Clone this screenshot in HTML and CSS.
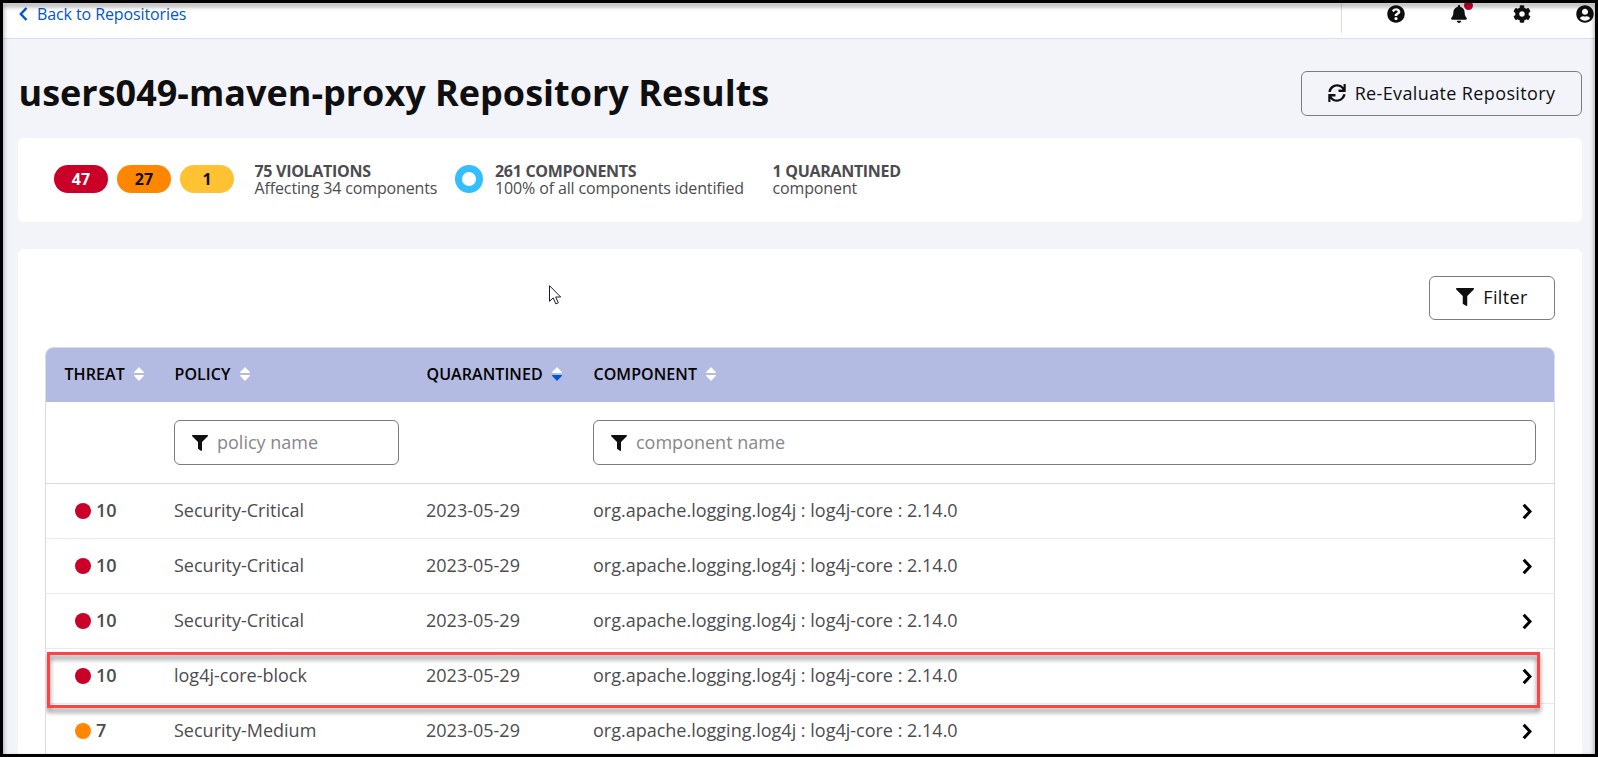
FILE: index.html
```html
<!DOCTYPE html>
<html lang="en">
<head>
<meta charset="utf-8">
<title>Repository Results</title>
<link rel="stylesheet" href="styles.css">
</head>
<body>
<svg class="defs" width="0" height="0">
  <symbol id="funnel" viewBox="0 0 512 512"><path d="M488 0H24C2.7 0-8 25.900 7 41L192 225.900V432c0 7.800 3.800 15.200 10.200 19.700l80 56C298 518.700 320 507.500 320 488V225.900L505 41C520 25.900 509.300 0 488 0z"/></symbol>
  <symbol id="chevron" viewBox="0 0 10 17"><path d="M1.700 1.700 8 8.500 1.700 15.300" fill="none" stroke="#000" stroke-width="3.100"/></symbol>
  <symbol id="sort" viewBox="0 0 10 14"><path class="up" d="M.6 6h8.800c.5 0 .8-.6.4-1L5.500.4a.7.700 0 0 0-1 0L.2 5c-.4.4-.1 1 .4 1z"/><path class="down" d="M.6 8h8.800c.5 0 .8.600.4 1L5.500 13.600a.7.700 0 0 1-1 0L.2 9c-.4-.4-.1-1 .4-1z"/></symbol>
</svg>
<div class="app">
  <header class="topbar">
    <a class="back"><svg width="9" height="14" viewBox="0 0 9 14"><path d="M7.500 1 1.800 7l5.700 6" fill="none" stroke="#0057c8" stroke-width="2.400"/></svg>Back to Repositories</a>
    <nav class="tools">
      <svg width="18" height="18" viewBox="0 0 512 512"><path d="M504 256c0 137-111 248-248 248S8 393 8 256C8 119.100 119 8 256 8s248 111.100 248 248zM262.700 90c-54.500 0-89.300 23-116.500 63.800-3.500 5.300-2.400 12.400 2.700 16.300l34.700 26.300c5.200 3.900 12.600 3 16.700-2.100 17.900-22.700 30.100-35.800 57.300-35.800 20.400 0 45.700 13.100 45.700 33 0 15-12.400 22.700-32.500 34C247.100 238.500 216 254.900 216 296v4c0 6.600 5.400 12 12 12h56c6.600 0 12-5.400 12-12v-1.300c0-28.500 83.200-29.600 83.200-106.700 0-58-60.200-102-116.500-102zM256 338c-25.400 0-46 20.600-46 46s20.600 46 46 46 46-20.600 46-46-20.600-46-46-46z"/></svg>
      <span class="bell"><svg width="16" height="18" viewBox="0 0 448 512"><path d="M224 512c35.300 0 64-28.700 64-64H160c0 35.300 28.600 64 64 64zm215.400-149.700c-19.300-20.800-55.500-52-55.500-154.300 0-77.700-54.500-139.900-127.900-155.200V32c0-17.700-14.300-32-32-32s-32 14.300-32 32v20.800C118.600 68.100 64.100 130.300 64.100 208c0 102.300-36.200 133.500-55.500 154.300-6 6.400-8.700 14.100-8.600 21.700.1 16.400 13 32 32.100 32h383.800c19.100 0 32-15.600 32.100-32 .1-7.600-2.600-15.300-8.600-21.700z"/></svg><i class="dot"></i></span>
      <svg width="18" height="18" viewBox="0 0 512 512"><path d="M487.400 315.700l-42.600-24.600c4.300-23.200 4.300-47 0-70.200l42.600-24.600c4.900-2.800 7.100-8.600 5.500-14-11.100-35.600-30-67.800-54.700-94.600-3.800-4.100-10-5.100-14.800-2.300L380.800 110c-17.900-15.400-38.500-27.300-60.800-35.100V25.800c0-5.600-3.900-10.500-9.400-11.700-36.700-8.200-74.300-7.800-109.200 0-5.500 1.200-9.400 6.100-9.400 11.700V75c-22.200 7.900-42.800 19.800-60.800 35.100L88.700 85.500c-4.900-2.800-11-1.900-14.800 2.300-24.700 26.700-43.600 58.900-54.700 94.600-1.700 5.400.6 11.200 5.500 14L67.300 221c-4.300 23.200-4.300 47 0 70.200l-42.600 24.600c-4.900 2.800-7.100 8.600-5.500 14 11.100 35.600 30 67.800 54.700 94.600 3.800 4.100 10 5.100 14.800 2.300l42.600-24.600c17.900 15.400 38.500 27.300 60.800 35.100v49.200c0 5.600 3.900 10.500 9.400 11.700 36.700 8.200 74.300 7.800 109.200 0 5.500-1.200 9.400-6.100 9.400-11.700v-49.200c22.200-7.900 42.800-19.800 60.800-35.100l42.600 24.600c4.900 2.800 11 1.900 14.800-2.300 24.700-26.700 43.600-58.900 54.700-94.600 1.500-5.500-.7-11.300-5.600-14.100zM256 336c-44.100 0-80-35.900-80-80s35.900-80 80-80 80 35.900 80 80-35.900 80-80 80z"/></svg>
      <svg width="18" height="18" viewBox="0 0 496 512"><path d="M248 8C111 8 0 119 0 256s111 248 248 248 248-111 248-248S385 8 248 8zm0 96c48.600 0 88 39.400 88 88s-39.400 88-88 88-88-39.400-88-88 39.400-88 88-88zm0 344c-58.700 0-111.300-26.600-146.500-68.200 18.800-35.400 55.600-59.800 98.500-59.800 2.400 0 4.800.4 7.100 1.100 13 4.200 26.600 6.900 40.900 6.900 14.300 0 28-2.700 40.900-6.900 2.300-.7 4.700-1.100 7.100-1.100 42.900 0 79.700 24.400 98.500 59.800C359.300 421.400 306.700 448 248 448z"/></svg>
    </nav>
  </header>
  <main>
    <div class="title-row">
      <h1>users049-maven-proxy Repository Results</h1>
      <button class="btn reeval"><svg width="18" height="18" viewBox="0 0 512 512"><path d="M440.700 12.600l4 82.800C399.800 41.700 332.200 8 256.500 8 134.800 8 33.900 94.900 12.300 209.800c-1.400 7.400 4.300 14.200 11.800 14.200h49.100c5.600 0 10.500-3.900 11.700-9.400C103.700 131.800 178 70 256 70c66.400 0 125.200 36.200 156.500 90l-101.500-4.900c-6.800-.3-12.500 5.100-12.500 12v47.400c0 6.600 5.400 12 12 12H492c6.600 0 12-5.400 12-12V12c0-6.600-5.400-12-12-12h-39.300c-6.900 0-12.300 5.700-12 12.600zM256 442c-66.400 0-125.200-36.200-156.500-90l101.500 4.900c6.800.3 12.500-5.100 12.500-12v-47.400c0-6.600-5.400-12-12-12H20c-6.600 0-12 5.400-12 12V500c0 6.600 5.400 12 12 12h39.300c6.900 0 12.300-5.700 12-12.600l-4-82.800C112.200 470.300 179.800 504 255.500 504c121.700 0 222.600-86.900 244.200-201.800 1.400-7.400-4.300-14.200-11.800-14.200h-49.100c-5.600 0-10.500 3.900-11.700 9.400C408.300 380.200 334 442 256 442z"/></svg><span>Re-Evaluate Repository</span></button>
    </div>
    <section class="card summary">
      <div class="pills"><b class="pill red">47</b><b class="pill orange">27</b><b class="pill yellow">1</b></div>
      <p class="stat violations"><b>75 VIOLATIONS</b><span>Affecting 34 components</span></p>
      <i class="donut"></i>
      <p class="stat components"><b>261 COMPONENTS</b><span>100% of all components identified</span></p>
      <p class="stat quarantined"><b>1 QUARANTINED</b><span>component</span></p>
    </section>
    <section class="card results">
      <button class="btn filter"><svg width="18" height="18"><use href="#funnel"/></svg><span>Filter</span></button>
      <div class="table">
        <div class="row head">
          <div><span>THREAT</span><svg class="sort" width="10" height="14"><use href="#sort"/></svg></div>
          <div><span>POLICY</span><svg class="sort" width="10" height="14"><use href="#sort"/></svg></div>
          <div><span>QUARANTINED</span><svg class="sort desc" width="10" height="14"><use href="#sort"/></svg></div>
          <div><span>COMPONENT</span><svg class="sort" width="10" height="14"><use href="#sort"/></svg></div>
        </div>
        <div class="row filters">
          <div></div>
          <div><label class="field policy"><svg width="16" height="16"><use href="#funnel"/></svg><span>policy name</span></label></div>
          <div></div>
          <div class="wide"><label class="field"><svg width="16" height="16"><use href="#funnel"/></svg><span>component name</span></label></div>
        </div>
        <div class="row"><div class="threat"><i></i><span>10</span></div><div>Security-Critical</div><div>2023-05-29</div><div>org.apache.logging.log4j : log4j-core : 2.14.0</div><svg class="go" width="10" height="17"><use href="#chevron"/></svg></div>
        <div class="row"><div class="threat"><i></i><span>10</span></div><div>Security-Critical</div><div>2023-05-29</div><div>org.apache.logging.log4j : log4j-core : 2.14.0</div><svg class="go" width="10" height="17"><use href="#chevron"/></svg></div>
        <div class="row"><div class="threat"><i></i><span>10</span></div><div>Security-Critical</div><div>2023-05-29</div><div>org.apache.logging.log4j : log4j-core : 2.14.0</div><svg class="go" width="10" height="17"><use href="#chevron"/></svg></div>
        <div class="row"><div class="threat"><i></i><span>10</span></div><div>log4j-core-block</div><div>2023-05-29</div><div>org.apache.logging.log4j : log4j-core : 2.14.0</div><svg class="go" width="10" height="17"><use href="#chevron"/></svg><span class="highlight"></span></div>
        <div class="row"><div class="threat medium"><i></i><span>7</span></div><div>Security-Medium</div><div>2023-05-29</div><div>org.apache.logging.log4j : log4j-core : 2.14.0</div><svg class="go" width="10" height="17"><use href="#chevron"/></svg></div>
      </div>
    </section>
  </main>
  <svg class="cursor" width="13" height="20" viewBox="0 0 13 20"><path d="M.5.700v15.600l3.700-3.400 2.600 6 2.500-1.100-2.600-5.800h5z" fill="#fff" stroke="#1c1c28"/></svg>
  <div class="frame"></div>
</div>
</body>
</html>
```

FILE: styles.css
```css
* { box-sizing: border-box; }
body { margin: 0; font-family: "Open Sans", "Noto Sans", sans-serif; font-size: 18px; color: #4c4c4f; }
h1, p { margin: 0; }
svg { display: block; flex: none; fill: #0f0f10; }
.defs { position: absolute; }
.app { position: relative; width: 1598px; height: 757px; overflow: hidden; background: #f3f4fa; }
.frame { position: absolute; inset: 0; border: 3px solid #000; filter: drop-shadow(0 3px 2.500px rgba(0,0,0,.5)); }

.topbar { display: flex; justify-content: space-between; height: 39px; background: #fff; border-bottom: 1px solid #dadaf0; }
.back { display: flex; align-items: center; gap: 9px; height: 28px; padding-left: 19px; font-size: 16px; letter-spacing: -.1px; color: #0057c8; }
.tools { display: flex; align-items: center; gap: 45px; height: 33px; padding: 0 4px 5px 45px; border-left: 1px solid #dadaf0; }
.bell { position: relative; margin: 0 1px; }
.dot { position: absolute; left: 13px; top: -4px; width: 9px; height: 9px; border-radius: 50%; background: #c8002f; }

main { padding: 32px 16px 0 18px; }
.title-row { display: flex; justify-content: space-between; height: 67px; }
h1 { padding-left: .5px; font-size: 36px; line-height: 43px; font-weight: 700; color: #0f0f10; white-space: nowrap; }
.btn { display: flex; flex: none; align-items: center; justify-content: center; gap: 9px; border: 1px solid #7c7c80; border-radius: 6px; background: transparent; font: 500 18px "Open Sans", sans-serif; letter-spacing: .37px; color: #0f0f10; padding: 0 0 1px; white-space: nowrap; }
.reeval { width: 281px; height: 45px; }
.card { background: #fff; border-radius: 6px; }
.summary { display: flex; height: 84px; padding: 27px 36px 0; margin-bottom: 27px; }
.pills { display: flex; gap: 9px; width: 200.500px; }
.pill { width: 54px; height: 28px; border-radius: 14px; font-size: 16px; line-height: 28px; font-weight: 700; text-align: center; color: #0f0f10; }
.red { background: #cb0029; color: #fff; }
.orange { background: #ff8700; }
.yellow { background: #ffc233; }
.stat { margin-top: -2px; font-size: 16px; line-height: 17px; letter-spacing: -.13px; white-space: nowrap; }
.stat b, .stat span { display: block; }
.stat b { font-weight: 700; letter-spacing: -.3px; }
.violations { width: 200.500px; }
.donut { width: 28px; height: 28px; border: 7px solid #33bfff; border-radius: 50%; margin: 0 12px 0 0; }
.components { width: 277.500px; }
.results { display: flex; flex-direction: column; align-items: flex-end; height: 600px; padding: 27px 27px 0; }
.filter { width: 126px; height: 44px; padding-bottom: 2px; margin-bottom: 27px; }

.table { width: 100%; flex: none; height: 560px; border: 1px solid #dadaf0; border-radius: 8px; overflow: hidden; }
.row { position: relative; display: grid; grid-template-columns: 110px 252px 167px 1fr 28px; align-items: center; height: 55px; padding-left: 18px; border-bottom: 1px solid #e8e8f6; white-space: nowrap; }
.row > div { padding-bottom: 3px; }
.head { height: 54px; background: #b4bbe2; border: 0; font-size: 16px; font-weight: 600; color: #000; }
.head > div { display: flex; align-items: center; gap: 9px; padding-left: .5px; }
.head span { letter-spacing: .07px; }
.head .sort { margin-top: 1px; }
.sort { fill: #fff; }
.desc { --down: #0057c8; }
.down { fill: var(--down, #fff); }
.filters { height: 82px; border-color: #dadaf0; }
.filters > div { padding-bottom: 0; }
.wide { grid-column: 4 / 6; padding-right: 18px; }
.field { display: flex; align-items: center; gap: 9px; height: 45px; border: 1px solid #7c7c80; border-radius: 6px; padding-left: 17px; color: #87878a; }
.field span { padding-bottom: 2px; }
.policy { width: 225px; }
.threat { display: flex; align-items: center; gap: 5px; padding-left: 11px; font-weight: 600; }
.threat i { width: 16px; height: 16px; margin-top: 2px; border-radius: 50%; background: #cb0029; }
.medium i { background: #ff8700; }
.go { margin-top: 1px; margin-left: -4px; }
.highlight { position: absolute; left: 1px; top: 3px; width: 1493px; height: 56px; border: 3px solid #ff4343; filter: drop-shadow(0 4px 2.500px rgba(0,0,0,.5)); z-index: 2; }
.cursor { position: absolute; left: 549px; top: 285px; }
```
